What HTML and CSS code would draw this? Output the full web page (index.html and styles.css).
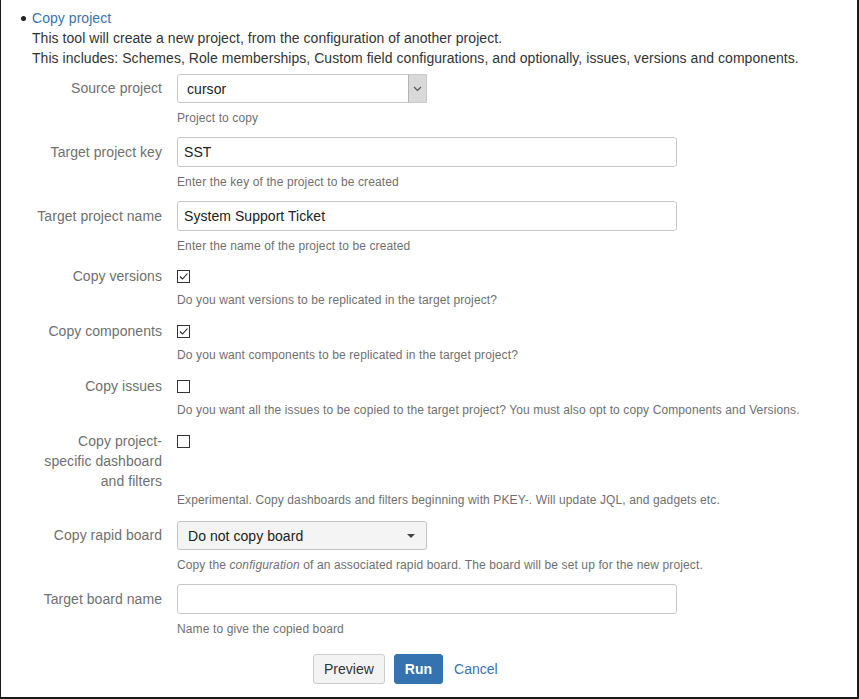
FILE: index.html
```html
<!DOCTYPE html>
<html>
<head>
<meta charset="utf-8">
<link rel="stylesheet" href="styles.css">
</head>
<body>
<div class="frame">
  <ul class="tools">
    <li>
      <a class="link" href="#">Copy project</a>
      <div>This tool will create a new project, from the configuration of another project.</div>
      <div>This includes: Schemes, Role memberships, Custom field configurations, and optionally, issues, versions and components.</div>

      <form class="form">
        <div class="field field-select first">
          <label class="flabel">Source project</label>
          <div class="control">
            <div class="native-select">
              <span class="ns-text">cursor</span>
              <span class="ns-btn">
                <svg width="9" height="6" viewBox="0 0 9 6"><path d="M1 1 L4.5 4.5 L8 1" fill="none" stroke="#555" stroke-width="1.2"/></svg>
              </span>
            </div>
          </div>
          <div class="desc">Project to copy</div>
        </div>

        <div class="field field-text">
          <label class="flabel">Target project key</label>
          <div class="control"><div class="input">SST</div></div>
          <div class="desc">Enter the key of the project to be created</div>
        </div>

        <div class="field field-text">
          <label class="flabel">Target project name</label>
          <div class="control"><div class="input">System Support Ticket</div></div>
          <div class="desc">Enter the name of the project to be created</div>
        </div>

        <div class="field field-check firstcheck">
          <label class="flabel">Copy versions</label>
          <div class="control check-line">
            <span class="cb"><svg width="11" height="11" viewBox="0 0 11 11"><path d="M2 5.5 L4.5 8 L9.5 2.5" fill="none" stroke="#222" stroke-width="1.1"/></svg></span>
          </div>
          <div class="desc">Do you want versions to be replicated in the target project?</div>
        </div>

        <div class="field field-check">
          <label class="flabel">Copy components</label>
          <div class="control check-line">
            <span class="cb"><svg width="11" height="11" viewBox="0 0 11 11"><path d="M2 5.5 L4.5 8 L9.5 2.5" fill="none" stroke="#222" stroke-width="1.1"/></svg></span>
          </div>
          <div class="desc">Do you want components to be replicated in the target project?</div>
        </div>

        <div class="field field-check">
          <label class="flabel">Copy issues</label>
          <div class="control check-line"><span class="cb"></span></div>
          <div class="desc">Do you want all the issues to be copied to the target project? You must also opt to copy Components and Versions.</div>
        </div>

        <div class="field field-check tall">
          <label class="flabel">Copy project-<br>specific dashboard<br>and filters</label>
          <div class="control check-line"><span class="cb"></span></div>
          <div class="desc">Experimental. Copy dashboards and filters beginning with PKEY-. Will update JQL, and gadgets etc.</div>
        </div>

        <div class="field field-select after-check">
          <label class="flabel">Copy rapid board</label>
          <div class="control">
            <div class="aui-select">
              <span>Do not copy board</span>
              <svg class="caret" width="8" height="4" viewBox="0 0 8 4"><path d="M0 0 L8 0 L4 4 Z" fill="#444"/></svg>
            </div>
          </div>
          <div class="desc">Copy the <em>configuration</em> of an associated rapid board. The board will be set up for the new project.</div>
        </div>

        <div class="field field-text">
          <label class="flabel">Target board name</label>
          <div class="control"><div class="input"></div></div>
          <div class="desc">Name to give the copied board</div>
        </div>

        <div class="buttons">
          <span class="btn">Preview</span>
          <span class="btn primary">Run</span>
          <a class="link cancel" href="#">Cancel</a>
        </div>
      </form>
    </li>
  </ul>
</div>
</body>
</html>
```

FILE: styles.css
```css
* { box-sizing: border-box; }
html, body { margin: 0; padding: 0; background: #fff; }
body {
  font-family: "Liberation Sans", Arial, sans-serif;
  font-size: 14px;
  line-height: 20px;
  color: #333;
  letter-spacing: 0.05px;
}
.frame {
  width: 859px;
  height: 699px;
  border-left: 1px solid #1a1a1a;
  border-right: 2px solid #1a1a1a;
  border-bottom: 2px solid #1a1a1a;
  padding-top: 8px;
  overflow: hidden;
}
.tools {
  margin: 0;
  padding-left: 31px;
  list-style: none;
}
.tools li { position: relative; }
.tools li::before {
  content: "";
  position: absolute;
  left: -11px;
  top: 8px;
  width: 5px;
  height: 5px;
  border-radius: 50%;
  background: #222;
}
.link { color: #3b73af; text-decoration: none; }
.form { margin: 0; padding: 0; }
.field {
  display: grid;
  grid-template-columns: 130px 500px;
  column-gap: 15px;
  margin-top: 9px;
}
.field.first { margin-top: 6px; }
.field-check { margin-top: 11px; }
.field.firstcheck { margin-top: 10px; }
.field.after-check { margin-top: 11px; }
.flabel {
  grid-column: 1;
  grid-row: 1;
  text-align: right;
  color: #707070;
}
.field-select .flabel { padding-top: 4px; }
.field-text .flabel { padding-top: 5px; }
.control { grid-column: 2; grid-row: 1; }
.desc {
  grid-column: 2;
  grid-row: 2;
  font-size: 12px;
  line-height: 20px;
  color: #707070;
  margin-top: 5px;
  white-space: nowrap;
  letter-spacing: 0.12px;
}
.field-check .desc { margin-top: 4px; }
.field.tall .desc { margin-top: -1px; }

.native-select {
  width: 250px;
  height: 29px;
  border: 1px solid #c8c8c8;
  border-radius: 3px 0 0 3px;
  display: flex;
  align-items: center;
  justify-content: space-between;
  padding-left: 9px;
  background: #fff;
}
.ns-text { color: #222; }
.ns-btn {
  width: 18px;
  height: 27px;
  background: #d9d9d9;
  border-left: 1px solid #b4b4b4;
  display: flex;
  align-items: center;
  justify-content: center;
}
.input {
  width: 500px;
  height: 30px;
  border: 1px solid #c8c8c8;
  border-radius: 3px;
  padding: 0 6px;
  line-height: 28px;
  color: #222;
  background: #fff;
}
.check-line {
  height: 20px;
  display: flex;
  align-items: center;
}
.cb {
  width: 13px;
  height: 13px;
  border: 1px solid #333;
  background: #fff;
  display: flex;
  align-items: center;
  justify-content: center;
}
.aui-select {
  width: 250px;
  height: 29px;
  border: 1px solid #c4c4c4;
  border-radius: 3px;
  background: #f4f4f4;
  display: flex;
  align-items: center;
  justify-content: space-between;
  padding: 0 11px 0 10px;
  color: #222;
}
.caret { display: block; }
.buttons {
  display: flex;
  align-items: center;
  margin-top: 15px;
  padding-left: 281px;
  letter-spacing: 0;
}
.btn {
  height: 30px;
  line-height: 28px;
  padding: 0 10px;
  border: 1px solid #ccc;
  border-radius: 3px;
  background: #f3f3f3;
  color: #333;
}
.btn.primary {
  margin-left: 9px;
  background: #3572b0;
  border-color: #3572b0;
  color: #fff;
  font-weight: bold;
  padding: 0 10px;
}
.cancel { margin-left: 11px; }
```
